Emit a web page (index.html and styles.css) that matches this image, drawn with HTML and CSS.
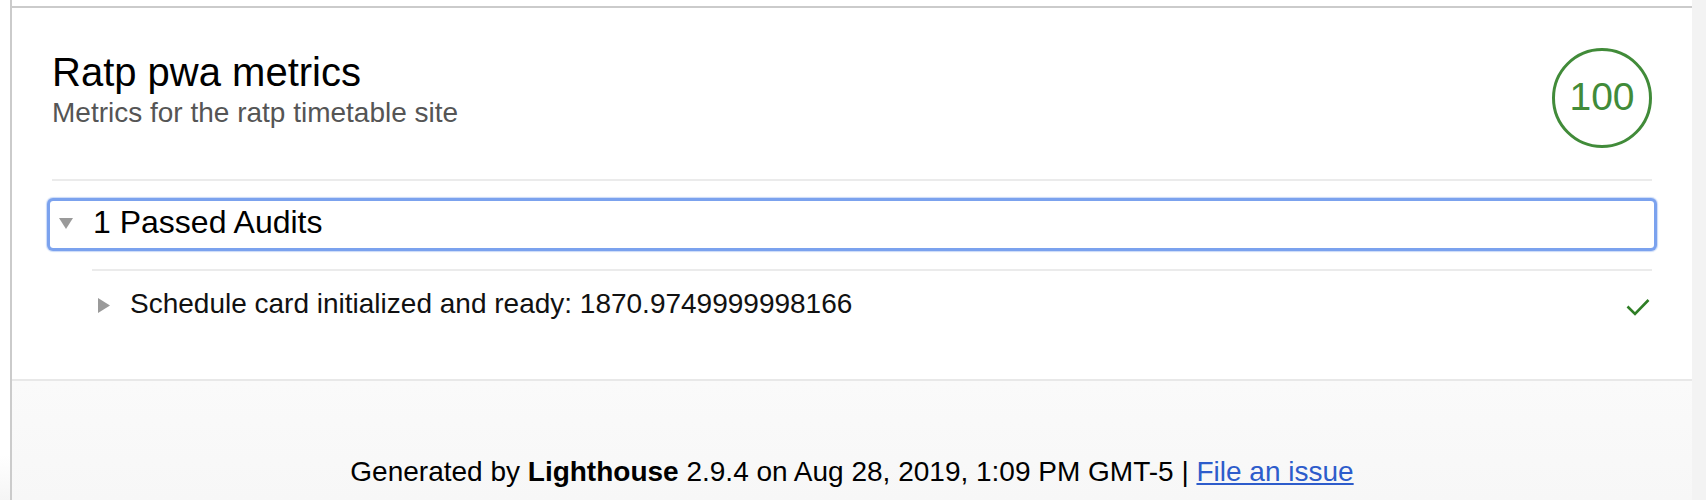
FILE: index.html
```html
<!DOCTYPE html>
<html lang="en">
<head>
<meta charset="utf-8">
<title>Lighthouse Report</title>
<link rel="stylesheet" href="styles.css">
</head>
<body>
<div class="page">
  <div class="gutter"></div>
  <div class="report">
    <section class="category">
      <header class="cat-header">
        <div class="cat-titles">
          <h1 class="cat-title">Ratp pwa metrics</h1>
          <p class="cat-desc">Metrics for the ratp timetable site</p>
        </div>
        <div class="score">100</div>
      </header>
      <div class="group">
        <div class="group-summary">
          <svg class="tri-down" width="14" height="11" viewBox="0 0 14 11"><polygon points="0,0 14,0 7,11" fill="#9a9a9a"/></svg>
          <span class="group-title">1 Passed Audits</span>
        </div>
        <div class="audits">
          <div class="audit">
            <svg class="tri-right" width="12" height="15" viewBox="0 0 12 15"><polygon points="0,0 12,7.5 0,15" fill="#9a9a9a"/></svg>
            <span class="audit-title">Schedule card initialized and ready: 1870.9749999998166</span>
            <svg class="check" width="24" height="20" viewBox="0 0 24 20"><polyline points="1.5,9.5 9,17 22.5,3" fill="none" stroke="#2f7e25" stroke-width="2.6"/></svg>
          </div>
        </div>
      </div>
    </section>
    <footer class="footer">Generated by <b>Lighthouse</b> 2.9.4 on Aug 28, 2019, 1:09 PM GMT-5 | <a class="footer-link" href="#">File an issue</a></footer>
  </div>
  <div class="scrollbar"></div>
</div>
</body>
</html>
```

FILE: styles.css
```css
html, body {
  margin: 0;
  padding: 0;
}
body {
  font-family: "Liberation Sans", Arial, sans-serif;
  background: #fff;
  color: #000;
}
.page {
  display: flex;
  height: 500px;
  overflow: hidden;
}
.gutter {
  width: 10px;
  flex: none;
  background: linear-gradient(to bottom, #fff 0, #fff 455px, #f5f5f5 500px);
}
.report {
  flex: 1;
  display: flex;
  flex-direction: column;
  border-left: 2px solid #cbcbcb;
  padding-top: 6px;
}
.scrollbar {
  width: 14px;
  flex: none;
  background: #f3f3f3;
}
.category {
  border-top: 2px solid #cbcbcb;
  background: #fff;
  padding: 40px 40px 42px;
}
.cat-header {
  display: flex;
  align-items: flex-start;
  justify-content: space-between;
  padding-bottom: 31px;
  border-bottom: 2px solid #ebebeb;
}
.cat-title {
  margin: 0;
  font-size: 40px;
  line-height: 48px;
  font-weight: normal;
  color: #000;
}
.cat-desc {
  margin: 0;
  font-size: 28px;
  line-height: 34px;
  color: #555;
}
.score {
  width: 100px;
  height: 100px;
  box-sizing: border-box;
  border: 3px solid #418b39;
  border-radius: 50%;
  display: flex;
  align-items: center;
  justify-content: center;
  font-size: 39px;
  color: #418b39;
  padding-bottom: 2px;
}
.group {
  margin-top: 20px;
}
.group-summary {
  display: flex;
  align-items: flex-start;
  margin: 0 -2px;
  height: 41px;
  padding-top: 1px;
  padding-bottom: 5px;
  border-radius: 3px;
  box-shadow: 0 0 0 3px #7ba2ee, 0 0 1px 4px rgba(123, 162, 238, 0.4);
}
.tri-down {
  margin: 16px 20px 0 9px;
  flex: none;
}
.group-title {
  font-size: 32px;
  line-height: 40px;
  color: #000;
}
.audits {
  margin: 21px 0 0 40px;
}
.audit {
  display: flex;
  align-items: center;
  border-top: 2px solid #ebebeb;
  padding: 16px 0;
}
.tri-right {
  flex: none;
  margin: 3px 20px 0 6px;
}
.audit-title {
  font-size: 28px;
  line-height: 34px;
  color: #111;
}
.check {
  flex: none;
  margin-left: auto;
  margin-right: 2px;
  margin-top: 6px;
}
.footer {
  flex: 1;
  border-top: 2px solid #e8e8e8;
  background: linear-gradient(to bottom, #fafafa, #f7f7f7);
  padding-top: 74px;
  text-align: center;
  font-size: 28px;
  line-height: 34px;
  color: #000;
}
.footer-link {
  color: #2d5ccb;
  text-decoration: underline;
}
```
